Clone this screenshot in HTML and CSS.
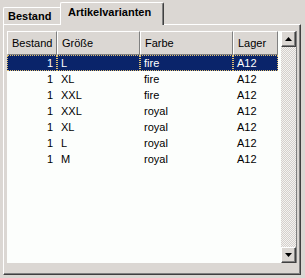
FILE: index.html
```html
<!DOCTYPE html>
<html lang="de">
<head>
    <meta charset="UTF-8">
    <title>Artikelvarianten</title>
    <link rel="stylesheet" href="styles.css">
</head>
<body>

<div class="tabs">
    <div class="tab">Bestand</div>
    <div class="tab active">Artikelvarianten</div>
</div>

<div class="panel">
    <div class="grid">
        <div class="list">
            <table>
                <colgroup>
                    <col class="c-bestand">
                    <col class="c-groesse">
                    <col class="c-farbe">
                    <col class="c-lager">
                </colgroup>
                <thead>
                    <tr>
                        <th>Bestand</th>
                        <th>Größe</th>
                        <th>Farbe</th>
                        <th>Lager</th>
                    </tr>
                </thead>
                <tbody>
                    <tr class="selected">
                        <td class="num">1</td>
                        <td>L</td>
                        <td>fire</td>
                        <td>A12</td>
                    </tr>
                    <tr>
                        <td class="num">1</td>
                        <td>XL</td>
                        <td>fire</td>
                        <td>A12</td>
                    </tr>
                    <tr>
                        <td class="num">1</td>
                        <td>XXL</td>
                        <td>fire</td>
                        <td>A12</td>
                    </tr>
                    <tr>
                        <td class="num">1</td>
                        <td>XXL</td>
                        <td>royal</td>
                        <td>A12</td>
                    </tr>
                    <tr>
                        <td class="num">1</td>
                        <td>XL</td>
                        <td>royal</td>
                        <td>A12</td>
                    </tr>
                    <tr>
                        <td class="num">1</td>
                        <td>L</td>
                        <td>royal</td>
                        <td>A12</td>
                    </tr>
                    <tr>
                        <td class="num">1</td>
                        <td>M</td>
                        <td>royal</td>
                        <td>A12</td>
                    </tr>
                </tbody>
            </table>
        </div>
        <div class="scrollbar">
            <div class="sb-btn">
                <svg width="7" height="4" viewBox="0 0 7 4"><path d="M3.5 0 L7 4 L0 4 Z" fill="#000"/></svg>
            </div>
            <div class="sb-track"></div>
            <div class="sb-btn">
                <svg width="7" height="4" viewBox="0 0 7 4"><path d="M0 0 L7 0 L3.5 4 Z" fill="#000"/></svg>
            </div>
        </div>
    </div>
</div>

</body>
</html>
```

FILE: styles.css
```css
* {
    box-sizing: border-box;
}
body {
    margin: 0;
    width: 305px;
    height: 278px;
    overflow: hidden;
    background-color: #dbd7d3;
    font-family: "Liberation Sans", Arial, sans-serif;
    font-size: 11px;
    color: #000;
}
.tabs {
    display: flex;
    align-items: flex-end;
    height: 24px;
    padding-left: 3px;
}
.tab {
    position: relative;
    width: 57px;
    height: 17px;
    padding: 2px 0 0 4px;
    font-weight: bold;
    border-top: 1px solid #fff;
    border-left: 1px solid #fff;
    border-top-left-radius: 2px;
}
.tab.active {
    z-index: 1;
    width: 104px;
    height: 23px;
    margin-bottom: -1px;
    padding: 3px 0 0 7px;
    background-color: #dbd7d3;
    border-right: 1px solid #404040;
    box-shadow: inset -1px 0 0 #808080;
    border-top-right-radius: 2px;
}
.panel {
    width: 298px;
    height: 251px;
    margin-left: 3px;
    padding: 6px 0 0 3px;
    border-top: 1px solid #fff;
    border-left: 1px solid #fff;
    border-right: 1px solid #404040;
    border-bottom: 1px solid #404040;
    box-shadow: inset -1px -1px 0 #808080;
}
.grid {
    display: flex;
    width: 290px;
    height: 232px;
    background-color: #fcfefc;
}
.list {
    width: 274px;
    height: 100%;
}
table {
    width: 271px;
    table-layout: fixed;
    border-collapse: separate;
    border-spacing: 0;
}
.c-bestand { width: 50px; }
.c-groesse { width: 83px; }
.c-farbe { width: 93px; }
.c-lager { width: 45px; }
th {
    height: 24px;
    padding: 0 0 0 4px;
    font-weight: normal;
    text-align: left;
    background-color: #dbd7d3;
    border-top: 1px solid #fff;
    border-left: 1px solid #fff;
    border-right: 1px solid #808080;
    border-bottom: 1px solid #808080;
}
td {
    height: 16px;
    padding: 0 0 0 3px;
    border: 1px solid transparent;
    white-space: nowrap;
    line-height: 14px;
}
td.num {
    text-align: right;
    padding: 0 3px 0 0;
}
tr.selected td {
    background-color: #0a246a;
    color: #fff;
    border: 1px dotted #e0c070;
}
.scrollbar {
    display: flex;
    flex-direction: column;
    width: 16px;
    height: 100%;
    border-right: 1px solid #808080;
}
.sb-btn {
    display: flex;
    align-items: center;
    justify-content: center;
    height: 16px;
    background-color: #dbd7d3;
    border-top: 1px solid #fff;
    border-left: 1px solid #fff;
    border-right: 1px solid #404040;
    border-bottom: 1px solid #404040;
    box-shadow: inset -1px -1px 0 #808080;
}
.sb-track {
    flex: 1;
    background: repeating-conic-gradient(#d4d0cc 0 25%, #f4f2f0 0 50%) 0 0 / 2px 2px;
}
```
